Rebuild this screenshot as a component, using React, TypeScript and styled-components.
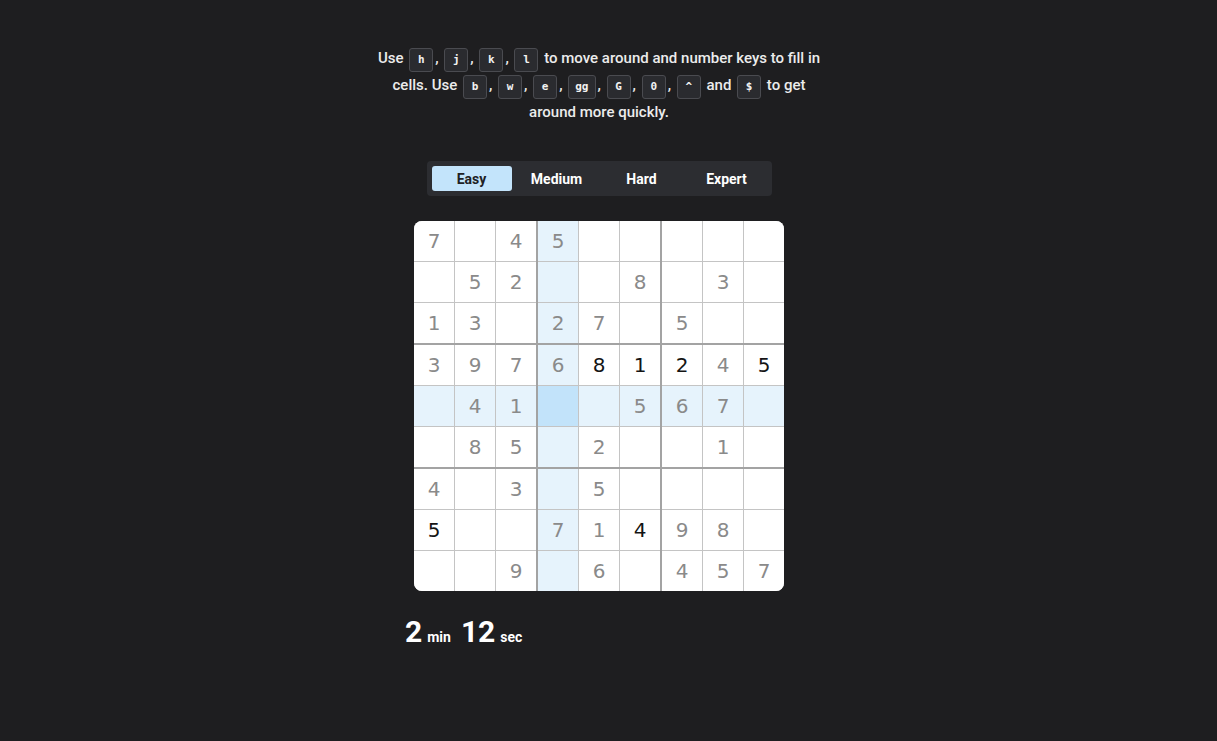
import React from "react";
import styled, { createGlobalStyle } from "styled-components";

const Global = createGlobalStyle`
  html, body { margin: 0; padding: 0; background: #1e1e20; }
  body { font-family: Roboto, "Liberation Sans", sans-serif; }
`;

const Page = styled.main`
  width: 1198px;
  min-height: 741px;
  display: flex;
  flex-direction: column;
  align-items: center;
  padding-top: 45px;
  box-sizing: border-box;
`;

const Help = styled.p`
  margin: 0;
  width: 447px;
  text-align: center;
  color: #ececec;
  font-size: 15px;
  font-weight: 500;
  line-height: 27px;
`;

const Kbd = styled.kbd`
  display: inline-block;
  box-sizing: border-box;
  min-width: 24px;
  height: 24px;
  line-height: 22px;
  padding: 0 6px;
  margin: 0 2px;
  background: #2a2b2f;
  border: 1px solid #4a4b50;
  border-radius: 3px;
  color: #f2f2f2;
  font-family: "DejaVu Sans Mono", "Liberation Mono", monospace;
  font-size: 11px;
  font-weight: 700;
  vertical-align: 0px;
`;

const Tabs = styled.div`
  margin-top: 35px;
  display: flex;
  gap: 5px;
  padding: 5px;
  background: #2c2d31;
  border-radius: 4px;
`;

const Tab = styled.button<{ $active?: boolean }>`
  width: 80px;
  height: 25px;
  border: none;
  border-radius: 3px;
  background: ${(p) => (p.$active ? "#c3e4fb" : "transparent")};
  color: ${(p) => (p.$active ? "#202124" : "#ffffff")};
  font-family: Roboto, "Liberation Sans", sans-serif;
  font-size: 14px;
  font-weight: 700;
  padding: 0;
  cursor: pointer;
`;

const Board = styled.div`
  margin-top: 25px;
  display: grid;
  grid-template-columns: repeat(3, 122px);
  grid-template-rows: repeat(3, 122px);
  gap: 2px;
  background: #a3a3a3;
  border-radius: 8px;
  overflow: hidden;
`;

const Box = styled.div`
  display: grid;
  grid-template-columns: repeat(3, 40px);
  grid-template-rows: repeat(3, 40px);
  gap: 1px;
  background: #c4c4c4;
`;

const Cell = styled.div<{ $bg: string; $given: boolean }>`
  background: ${(p) => p.$bg};
  display: flex;
  align-items: center;
  justify-content: center;
  font-family: "DejaVu Sans", "Noto Sans", sans-serif;
  font-size: 20px;
  color: ${(p) => (p.$given ? "#8a8a8a" : "#141414")};
`;

const Timer = styled.div`
  margin-top: 23px;
  width: 388px;
  display: flex;
  align-items: baseline;
  color: #ffffff;
  font-weight: 700;
`;

const Big = styled.span`
  font-size: 30px;
  margin-right: 5px;
`;

const Small = styled.span`
  font-size: 14px;
  margin-right: 10px;
`;

// digit, and 'b' suffix for black (user-entered)
const rows = [
  "7.45.....",
  ".52..8.3.",
  "13.27.5..",
  "39768b1b2b45b",
  ".41..567.",
  ".85.2..1.",
  "4.3.5....",
  "5b..714b98.",
  "..9.6.457",
];

type C = { v: string; black: boolean };

function parseRow(s: string): C[] {
  const out: C[] = [];
  for (let i = 0; i < s.length; i++) {
    const ch = s[i];
    if (ch === "b") {
      out[out.length - 1].black = true;
    } else {
      out.push({ v: ch === "." ? "" : ch, black: false });
    }
  }
  return out;
}

const grid = rows.map(parseRow);

const SEL_R = 4;
const SEL_C = 3;

function cellBg(r: number, c: number) {
  if (r === SEL_R && c === SEL_C) return "#c2e3fa";
  if (r === SEL_R || c === SEL_C) return "#e6f3fc";
  return "#ffffff";
}

export default function App() {
  const boxes = [];
  for (let br = 0; br < 3; br++) {
    for (let bc = 0; bc < 3; bc++) {
      const cells = [];
      for (let r = br * 3; r < br * 3 + 3; r++) {
        for (let c = bc * 3; c < bc * 3 + 3; c++) {
          const cell = grid[r][c];
          cells.push(
            <Cell key={`${r}-${c}`} $bg={cellBg(r, c)} $given={!cell.black}>
              {cell.v}
            </Cell>
          );
        }
      }
      boxes.push(<Box key={`${br}-${bc}`}>{cells}</Box>);
    }
  }

  return (
    <>
      <Global />
      <Page>
        <Help>
          Use <Kbd>h</Kbd>, <Kbd>j</Kbd>, <Kbd>k</Kbd>, <Kbd>l</Kbd> to move
          around and number keys to fill in cells. Use <Kbd>b</Kbd>,{" "}
          <Kbd>w</Kbd>, <Kbd>e</Kbd>, <Kbd>gg</Kbd>, <Kbd>G</Kbd>,{" "}
          <Kbd>0</Kbd>, <Kbd>^</Kbd> and <Kbd>$</Kbd> to get around more
          quickly.
        </Help>
        <Tabs>
          <Tab $active>Easy</Tab>
          <Tab>Medium</Tab>
          <Tab>Hard</Tab>
          <Tab>Expert</Tab>
        </Tabs>
        <Board>{boxes}</Board>
        <Timer>
          <Big>2</Big>
          <Small>min</Small>
          <Big>12</Big>
          <Small>sec</Small>
        </Timer>
      </Page>
    </>
  );
}
